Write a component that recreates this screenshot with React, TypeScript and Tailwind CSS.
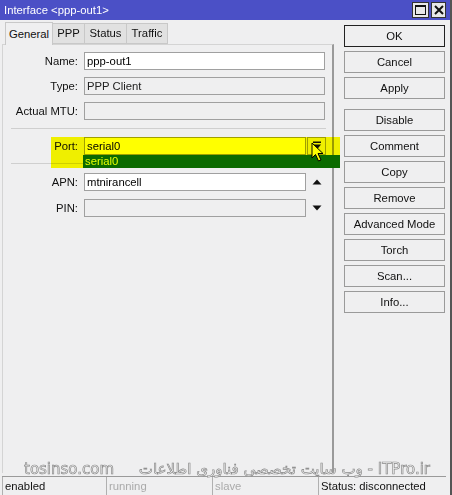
import React from "react";

const Field = ({ label, value, disabled, width = "w-[241px]" }: { label: string; value?: string; disabled?: boolean; width?: string }) => (
  <div className="flex items-center h-[18px]">
    <div className="w-[76px] text-right pr-[1px] text-[#111]">{label}</div>
    <div
      className={`ml-[5px] h-[18px] ${width} border border-[#a0a0a0] flex items-center pl-[2px] ${
        disabled ? "bg-[#efeff0] text-[#222]" : "bg-white text-black"
      }`}
    >
      {value}
    </div>
  </div>
);

const Btn = ({ label, ok }: { label: string; ok?: boolean }) => (
  <div
    className={`h-[22px] w-[101px] flex items-center justify-center bg-[#efeff0] text-[#111] ${
      ok ? "border-[1.5px] border-[#222]" : "border border-[#9a9a9a]"
    }`}
  >
    {label}
  </div>
);

export default function App() {
  return (
    <div className="relative w-[452px] h-[495px] bg-[#efeff0] font-['Liberation_Sans',sans-serif] text-[11.3px] overflow-hidden border-r-2 border-[#555]">
      {/* title bar */}
      <div className="h-[20px] bg-[#4b50c6] flex items-center justify-between pl-[4px] pr-[4px]">
        <span className="text-white text-[11.3px]">Interface &lt;ppp-out1&gt;</span>
        <div className="flex gap-[2px]">
          <div className="w-[17px] h-[16px] bg-[#e8e8e8] border border-[#333] flex items-center justify-center">
            <div className="w-[11px] h-[10px] border-[1.5px] border-[#111] border-t-[2px]" />
          </div>
          <div className="w-[15px] h-[16px] bg-[#e8e8e8] border border-[#333] flex items-center justify-center">
            <svg width="10" height="10" viewBox="0 0 10 10">
              <path d="M1 1L9 9M9 1L1 9" stroke="#111" strokeWidth="2" />
            </svg>
          </div>
        </div>
      </div>

      <div className="flex h-[456px]">
        {/* left column */}
        <div className="w-[334px] pl-[2px] pt-[2px] flex flex-col">
          <div className="flex items-end h-[22px] pl-[3px]">
            <div className="h-[23px] w-[48px] flex items-center justify-center bg-[#efeff0] border border-b-0 border-[#c8c8c8] text-[#111] relative z-10 -mb-[1px]">General</div>
            <div className="h-[21px] w-[32px] flex items-center justify-center bg-[#e1e1e1] border border-[#c8c8c8] border-l-0 text-[#111]">PPP</div>
            <div className="h-[21px] w-[42px] flex items-center justify-center bg-[#e1e1e1] border border-[#c8c8c8] border-l-0 text-[#111]">Status</div>
            <div className="h-[21px] w-[41px] flex items-center justify-center bg-[#e1e1e1] border border-[#c8c8c8] border-l-0 text-[#111]">Traffic</div>
          </div>
          <div className="relative flex-1 border-l border-t border-[#d4d4d4] border-r-2 border-r-[#9a9a9a] pt-[7px] mb-[3px]">
            <div className="flex flex-col gap-[7px]">
              <Field label="Name:" value="ppp-out1" />
              <Field label="Type:" value="PPP Client" disabled />
              <Field label="Actual MTU:" disabled />
            </div>
            <div className="ml-[8px] mt-[8px] w-[315px] h-[1px] bg-[#cfcfcf]" />
            <div className="mt-[8px] flex items-center h-[18px]">
              <Field label="Port:" value="serial0" width="w-[222px]" />
              <div className="ml-[1px] h-[18px] w-[19px] border border-[#a0a0a0] bg-[#efeff0] flex items-center justify-center">
                <svg width="10" height="10" viewBox="0 0 10 10">
                  <rect x="1" y="0.5" width="8" height="1.5" fill="#111" />
                  <path d="M1 3.5H9L5 8.5Z" fill="#111" />
                </svg>
              </div>
            </div>
            <div className="ml-[8px] mt-[8px] w-[315px] h-[1px] bg-[#cfcfcf]" />
            <div className="mt-[9px] flex items-center">
              <Field label="APN:" value="mtnirancell" width="w-[222px]" />
              <svg className="ml-[6px]" width="10" height="8" viewBox="0 0 10 8">
                <path d="M0.5 6.5H9.5L5 1.5Z" fill="#111" />
              </svg>
            </div>
            <div className="mt-[8px] flex items-center">
              <Field label="PIN:" disabled width="w-[222px]" />
              <svg className="ml-[6px]" width="10" height="8" viewBox="0 0 10 8">
                <path d="M0.5 1.5H9.5L5 6.5Z" fill="#111" />
              </svg>
            </div>
          </div>
        </div>

        {/* right column buttons */}
        <div className="ml-[10px] pt-[5px] flex flex-col">
          <Btn label="OK" ok />
          <div className="mt-[4px] flex flex-col gap-[4px]">
            <Btn label="Cancel" />
            <Btn label="Apply" />
          </div>
          <div className="mt-[10px] flex flex-col gap-[4px]">
            <Btn label="Disable" />
            <Btn label="Comment" />
            <Btn label="Copy" />
            <Btn label="Remove" />
            <Btn label="Advanced Mode" />
            <Btn label="Torch" />
            <Btn label="Scan..." />
            <Btn label="Info..." />
          </div>
        </div>
      </div>

      {/* status bar */}
      <div className="h-[19px] border-t border-[#9a9a9a] flex mr-[4px] ml-[2px]">
        <div className="w-[105px] border-l border-r border-[#b0b0b0] pl-[2px] flex items-center text-[#111]">enabled</div>
        <div className="w-[106px] border-r border-[#b0b0b0] pl-[2px] flex items-center text-[#aaa]">running</div>
        <div className="w-[106px] border-r border-[#b0b0b0] pl-[2px] flex items-center text-[#aaa]">slave</div>
        <div className="flex-1 pl-[2px] flex items-center text-[#111]">Status: disconnected</div>
      </div>

      {/* dropdown list */}
      <div className="absolute left-[83px] top-[155px] w-[257px] h-[13px] bg-[#0b6b0b] text-[#e8ffd8] flex items-center pl-[2px] leading-none">
        serial0
      </div>

      {/* cursor */}
      <svg className="absolute left-[311px] top-[142px]" width="14" height="20" viewBox="0 0 14 20">
        <path d="M1 1V16L4.5 12.5L7.5 19L10 18L7 11.5H12Z" fill="white" stroke="black" strokeWidth="1" />
      </svg>

      {/* yellow highlight */}
      <div className="absolute left-[51px] top-[137px] w-[289px] h-[31px] bg-[#ffff00] mix-blend-multiply" />

      {/* watermark */}
      <div className="absolute left-[24px] top-[462px] w-[406px] flex items-center justify-between font-['DejaVu_Sans',sans-serif] text-[15px] text-[#f4f4f4] [-webkit-text-stroke:0.7px_#8a8a8a] whitespace-nowrap leading-none">
        <span>tosinso.com</span>
        <span>وب سایت تخصصی فناوری اطلاعات - ITPro.ir</span>
      </div>
    </div>
  );
}
